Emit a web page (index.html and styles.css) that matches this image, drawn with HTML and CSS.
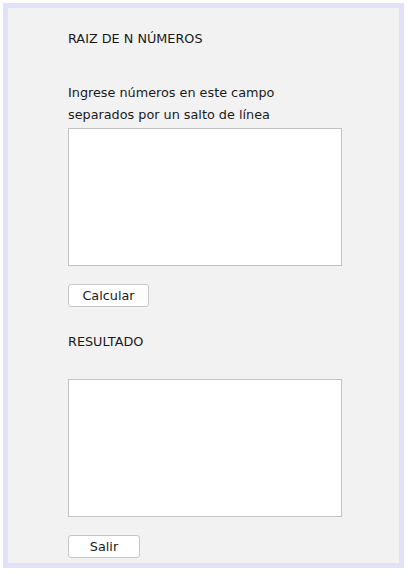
FILE: index.html
```html
<!DOCTYPE html>
<html lang="es">
<head>
<meta charset="utf-8">
<title>Raiz de N números</title>
<link rel="stylesheet" href="styles.css">
</head>
<body>
<div class="frame">
  <div class="panel">
    <div class="title">RAIZ DE N NÚMEROS</div>
    <div class="hint">Ingrese números en este campo<br>separados por un salto de línea</div>
    <textarea class="field field-input"></textarea>
    <button class="btn btn-calc" type="button">Calcular</button>
    <div class="title title-result">RESULTADO</div>
    <textarea class="field field-output"></textarea>
    <button class="btn btn-exit" type="button">Salir</button>
  </div>
</div>
</body>
</html>
```
FILE: styles.css
```css
* { box-sizing: border-box; }
html, body { margin: 0; padding: 0; background: #ffffff; }
body {
  font-family: "DejaVu Sans", sans-serif;
  font-size: 12.8px;
  color: #1a1a1a;
}
.frame {
  margin: 3px;
  width: 401px;
  height: 565px;
  border: 5px solid #e1e1f8;
  background: #f2f2f2;
}
.panel {
  display: flex;
  flex-direction: column;
  align-items: flex-start;
  padding: 20px 0 0 60px;
}
.title {
  line-height: 22px;
  height: 22px;
}
.hint {
  margin-top: 32px;
  line-height: 22px;
}
.field {
  display: block;
  width: 274px;
  height: 138px;
  margin: 0;
  padding: 2px;
  border: 1px solid #c2c2c2;
  background: #ffffff;
  resize: none;
  font: inherit;
  outline: none;
}
.field-input { margin-top: 2px; }
.btn {
  margin: 18px 0 0 0;
  height: 23px;
  padding: 0;
  border: 1px solid #c6c6c6;
  border-radius: 3px;
  background: #ffffff;
  font-family: "DejaVu Sans", sans-serif;
  font-size: 12.8px;
  color: #1a1a1a;
  line-height: 21px;
  text-align: center;
}
.btn-calc { width: 81px; }
.btn-exit { width: 72px; }
.title-result { margin-top: 24px; }
.field-output { margin-top: 26px; }
```
